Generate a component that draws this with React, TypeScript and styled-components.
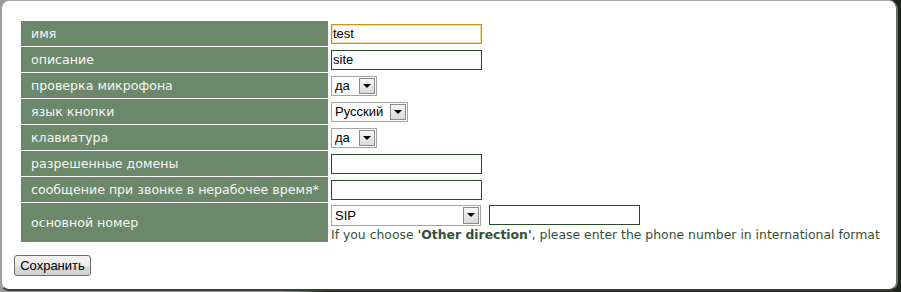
import styled, { createGlobalStyle } from 'styled-components';

const GlobalStyle = createGlobalStyle`
  html, body {
    margin: 0;
    padding: 0;
    height: 100%;
  }
  body {
    background: linear-gradient(135deg, #9a9a9a 0%, #9a9a9a 48%, #1c261d 52%, #1c261d 100%);
    font-family: "DejaVu Sans", Verdana, sans-serif;
  }
`;

const Panel = styled.div`
  box-sizing: border-box;
  width: 898px;
  height: 291px;
  background: #fff;
  border-top: 1px solid #a8a8a8;
  border-left: 2px solid #a0a0a0;
  border-right: 2px solid #6a6a6a;
  border-bottom: 2px solid #3a3a3a;
  border-radius: 9px;
  padding: 19px 0 0 12px;
`;

const FormTable = styled.table`
  border-collapse: separate;
  border-spacing: 1px;
  margin-left: 6px;
`;

const LabelCell = styled.td<{ $tall?: boolean }>`
  width: 297px;
  height: ${p => (p.$tall ? 39 : 25)}px;
  padding: 0 0 0 10px;
  background: #6b886b;
  color: #f6f6f6;
  font-size: 12.6px;
  vertical-align: middle;
  white-space: nowrap;
`;

const ValueCell = styled.td`
  padding: 0 0 0 2px;
  vertical-align: middle;
`;

const TextInput = styled.input<{ $focused?: boolean }>`
  box-sizing: border-box;
  width: 151px;
  height: 20px;
  margin: 0;
  padding: 0 1px;
  display: block;
  border: 1px solid ${p => (p.$focused ? '#c4961c' : '#2d4a2d')};
  box-shadow: ${p => (p.$focused ? 'inset 0 0 0 1px #f3dc9a' : 'none')};
  font-family: "Liberation Sans", Arial, sans-serif;
  font-size: 13px;
  color: #000;
  outline: none;
  caret-color: #000;
`;

const Select = styled.div<{ $width: number; $height?: number }>`
  box-sizing: border-box;
  display: inline-flex;
  align-items: stretch;
  width: ${p => p.$width}px;
  height: ${p => p.$height ?? 20}px;
  border: 1px solid #a5a5a5;
  background: #fff;
  font-family: "Liberation Sans", Arial, sans-serif;
  font-size: 13px;
  color: #000;
  vertical-align: middle;
`;

const SelectValue = styled.span`
  flex: 1;
  display: flex;
  align-items: center;
  padding-left: 3px;
`;

const SelectArrow = styled.span`
  box-sizing: border-box;
  width: 16px;
  margin: 1px;
  border: 1px solid #8a8a8a;
  background: linear-gradient(#f6f6f6, #dadada);
  display: flex;
  align-items: center;
  justify-content: center;

  &::after {
    content: '';
    border-left: 4px solid transparent;
    border-right: 4px solid transparent;
    border-top: 4px solid #000;
  }
`;

const NumberLine = styled.div`
  display: flex;
  align-items: center;
  gap: 8px;
  margin-top: 1px;
`;

const Hint = styled.div`
  font-size: 12.4px;
  color: #33503a;
  white-space: nowrap;
  margin-top: 1px;

  b {
    font-weight: bold;
  }
`;

const SaveButton = styled.button`
  box-sizing: border-box;
  width: 77px;
  height: 21px;
  margin-top: 12px;
  padding: 0;
  border: 1px solid #707070;
  border-radius: 3px;
  background: linear-gradient(#f3f3f3 0%, #ebebeb 50%, #dddddd 51%, #cfcfcf 100%);
  font-family: "Liberation Sans", Arial, sans-serif;
  font-size: 13px;
  color: #000;
`;

const FakeSelect = ({ value, width, height }: { value: string; width: number; height?: number }) => (
  <Select $width={width} $height={height}>
    <SelectValue>{value}</SelectValue>
    <SelectArrow />
  </Select>
);

const App = () => {
  return (
    <>
      <GlobalStyle />
      <Panel>
        <FormTable>
          <tbody>
            <tr>
              <LabelCell>имя</LabelCell>
              <ValueCell><TextInput $focused defaultValue="test" autoFocus /></ValueCell>
            </tr>
            <tr>
              <LabelCell>описание</LabelCell>
              <ValueCell><TextInput defaultValue="site" /></ValueCell>
            </tr>
            <tr>
              <LabelCell>проверка микрофона</LabelCell>
              <ValueCell><FakeSelect value="да" width={46} /></ValueCell>
            </tr>
            <tr>
              <LabelCell>язык кнопки</LabelCell>
              <ValueCell><FakeSelect value="Русский" width={77} /></ValueCell>
            </tr>
            <tr>
              <LabelCell>клавиатура</LabelCell>
              <ValueCell><FakeSelect value="да" width={46} /></ValueCell>
            </tr>
            <tr>
              <LabelCell>разрешенные домены</LabelCell>
              <ValueCell><TextInput /></ValueCell>
            </tr>
            <tr>
              <LabelCell>сообщение при звонке в нерабочее время*</LabelCell>
              <ValueCell><TextInput /></ValueCell>
            </tr>
            <tr>
              <LabelCell $tall>основной номер</LabelCell>
              <ValueCell>
                <NumberLine>
                  <FakeSelect value="SIP" width={150} height={21} />
                  <TextInput />
                </NumberLine>
                <Hint>
                  If you choose <b>'Other direction'</b>, please enter the phone number in international format
                </Hint>
              </ValueCell>
            </tr>
          </tbody>
        </FormTable>
        <SaveButton>Сохранить</SaveButton>
      </Panel>
    </>
  );
};

export default App;
